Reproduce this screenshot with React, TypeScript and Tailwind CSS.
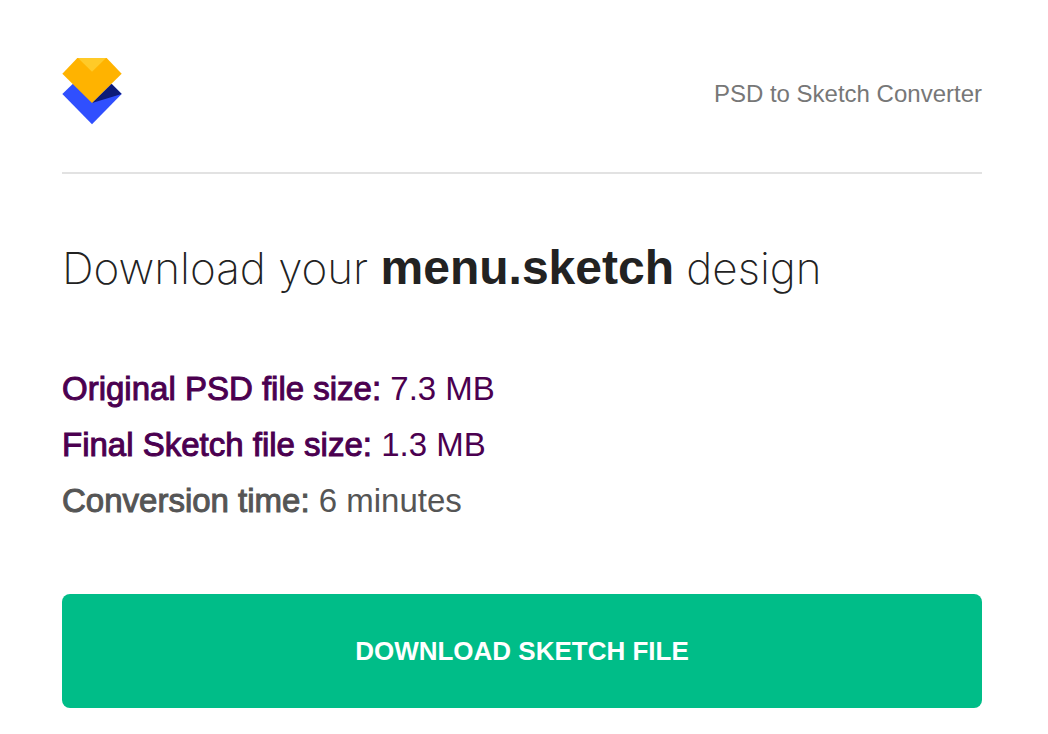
const details = [
  { label: 'Original PSD file size', value: '7.3 MB', color: 'text-[#4b0050]' },
  { label: 'Final Sketch file size', value: '1.3 MB', color: 'text-[#4b0050]' },
  { label: 'Conversion time', value: '6 minutes', color: 'text-[#555555]' },
];

function Logo() {
  return (
    <svg viewBox="0 0 180 204" className="h-[68px] w-[60px]" role="img" aria-label="Logo">
      <path d="M32 81 1 111l89 91 89-91-30-30z" fill="#304ffe" />
      <path d="M149 81 90 138l89-27z" fill="#0d1b78" />
      <path d="M46 3h88l45 47-89 88L1 50z" fill="#ffb300" />
      <path d="M48 3h84L90 44z" fill="#ffca28" />
    </svg>
  );
}

export default function App() {
  return (
    <main className="min-h-screen bg-white pl-[62px] pr-[66px] pt-[57px] pb-6 font-['Liberation_Sans',Arial,sans-serif]">
      <header className="flex items-center justify-between border-b-2 border-[#e2e2e2] pb-[47px]">
        <Logo />
        <p className="pt-1.5 text-2xl text-[#777777]">PSD to Sketch Converter</p>
      </header>

      <h1 className="mt-16 font-['Inter',sans-serif] text-[44px] leading-[60px] font-extralight text-[#222222]">
        Download your{' '}
        <strong className="font-['Liberation_Sans',Arial,sans-serif] text-5xl leading-[60px] font-bold">menu.sketch</strong> design
      </h1>

      <div className="mt-[63px] text-[33px] leading-[56px]">
        {details.map(({ label, value, color }) => (
          <p key={label} className={color}>
            <span className="[-webkit-text-stroke:1px_currentColor]">{label}:</span> {value}
          </p>
        ))}
      </div>

      <a
        href="#download"
        className="mt-[65px] block rounded-lg bg-[#00bd88] py-[41px] text-center text-[26px] leading-8 font-bold text-white"
      >
        DOWNLOAD SKETCH FILE
      </a>
    </main>
  );
}
